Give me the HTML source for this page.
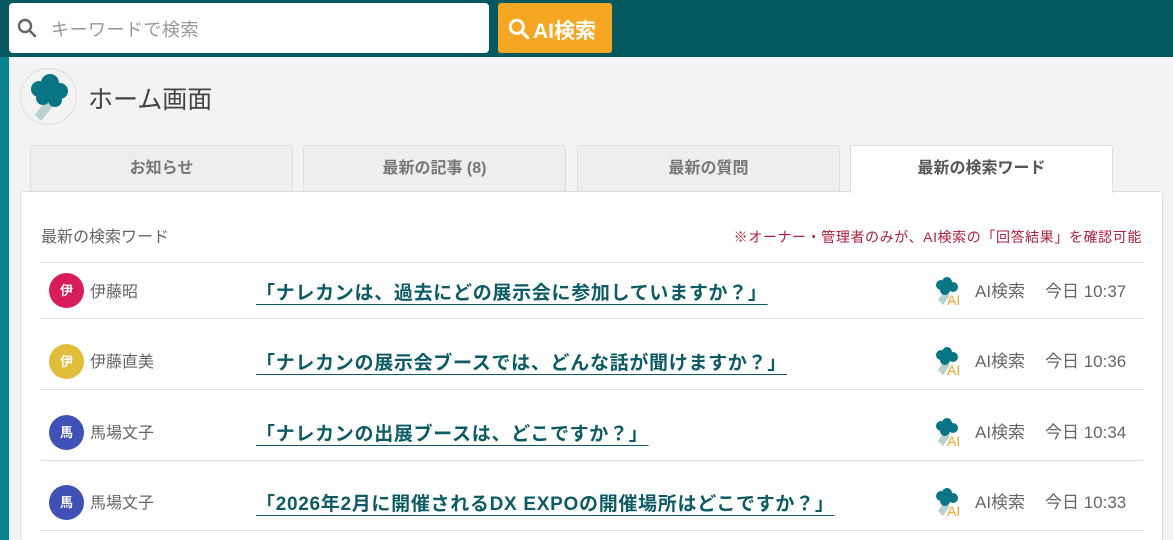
<!DOCTYPE html>
<html><head><meta charset="utf-8"><style>
*{margin:0;padding:0;box-sizing:border-box}
html,body{width:1173px;height:540px;overflow:hidden}
body{background:#f3f3f3;font-family:"Liberation Sans","Noto Sans CJK JP",sans-serif;position:relative}
.top{position:absolute;left:0;top:0;width:1173px;height:57px;background:#055860}
.strip{position:absolute;left:0;top:57px;width:9px;height:483px;background:#0a8390}
.search{position:absolute;left:9px;top:3px;width:480px;height:50px;background:#fff;border-radius:4px}
.search span{position:absolute;left:42px;top:13px;font-size:18px;color:#999;letter-spacing:.5px}
.aibtn{position:absolute;left:498px;top:3px;width:114px;height:50px;background:#f5a623;border-radius:3px;color:#fff;font-size:21px;font-weight:bold}
.aibtn span{position:absolute;left:35px;top:12px}
.logo{position:absolute;left:20px;top:68px;width:57px;height:57px;border-radius:50%;border:1px solid #ddd;background:#f3f3f3}
.title{position:absolute;left:88px;top:80px;font-size:25px;color:#444}
.tab{position:absolute;top:145px;height:47px;width:263px;background:#eee;border:1px solid #ddd;border-bottom:none;border-radius:3px 3px 0 0;text-align:center;line-height:46px;font-size:16px;color:#777;font-weight:bold}
.tab.act{background:#fff;color:#555;z-index:2;height:48px}
.panel{position:absolute;left:20px;top:191px;width:1143px;height:349px;background:#fff;border:1px solid #ddd;border-bottom:none;border-radius:3px 3px 0 0}
.h{position:absolute;left:41px;top:223px;font-size:16px;color:#666}
.note{position:absolute;right:31px;top:227px;font-size:14px;letter-spacing:.6px;color:#b0203d}
.sep{position:absolute;left:41px;width:1102px;height:1px;background:#ddd}
.av{position:absolute;left:49px;width:35px;height:35px;border-radius:50%;color:#fff;font-size:13px;text-align:center;line-height:35px;font-weight:bold}
.nm{position:absolute;left:90px;font-size:16px;color:#666}
.q{position:absolute;left:256px;font-size:19px;letter-spacing:.7px;color:#0d5b66;font-weight:bold;text-decoration:underline;text-underline-offset:5px}
.ai{position:absolute;left:935px;width:28px;height:30px}
.ail{position:absolute;left:975px;font-size:17px;color:#666}
.tm{position:absolute;left:1045px;font-size:17px;color:#666}
</style></head><body>
<div class="top"></div><div class="strip"></div>
<div class="search"><svg style="position:absolute;left:8px;top:15px" width="20" height="20" viewBox="0 0 20 20"><circle cx="8" cy="8" r="6" fill="none" stroke="#666" stroke-width="2.4"/><path d="M12.5 12.5L18 18" stroke="#666" stroke-width="2.6" stroke-linecap="round"/></svg><span>キーワードで検索</span></div>
<div class="aibtn"><svg style="position:absolute;left:10px;top:15px" width="22" height="22" viewBox="0 0 20 20"><circle cx="8" cy="8" r="6" fill="none" stroke="#fff" stroke-width="2.6"/><path d="M12.5 12.5L18 18" stroke="#fff" stroke-width="2.8" stroke-linecap="round"/></svg><span>AI検索</span></div>
<div class="logo"><svg width="57" height="57" viewBox="0 0 57 57"><path d="M14 46L24 32L32 37L20 52Z" fill="#b8d0d0"/><circle cx="18" cy="20" r="8" fill="#0a7585"/><circle cx="29" cy="14" r="9" fill="#0a7585"/><circle cx="39" cy="22" r="8" fill="#0a7585"/><circle cx="34" cy="31" r="7" fill="#0a7585"/><circle cx="22" cy="29" r="7" fill="#0a7585"/><circle cx="28" cy="23" r="7" fill="#0a7585"/></svg></div>
<div class="title">ホーム画面</div>
<div class="tab" style="left:30px">お知らせ</div>
<div class="tab" style="left:303px">最新の記事 (8)</div>
<div class="tab" style="left:577px">最新の質問</div>
<div class="tab act" style="left:850px">最新の検索ワード</div>
<div class="panel"></div>
<div class="h">最新の検索ワード</div>
<div class="note">※オーナー・管理者のみが、AI検索の「回答結果」を確認可能</div>
<div class="sep" style="top:262px"></div><div class="sep" style="top:318px"></div><div class="sep" style="top:389px"></div><div class="sep" style="top:460px"></div><div class="sep" style="top:530px"></div>

<div class="av" style="top:273px;background:#d81b5a">伊</div><div class="nm" style="top:278px">伊藤昭</div>
<div class="q" style="top:278px">「ナレカンは、過去にどの展示会に参加していますか？」</div>
<div class="av" style="top:344px;background:#e2bd3c">伊</div><div class="nm" style="top:348px">伊藤直美</div>
<div class="q" style="top:348px">「ナレカンの展示会ブースでは、どんな話が聞けますか？」</div>
<div class="av" style="top:415px;background:#3f51b5">馬</div><div class="nm" style="top:419px">馬場文子</div>
<div class="q" style="top:419px">「ナレカンの出展ブースは、どこですか？」</div>
<div class="av" style="top:485px;background:#3f51b5">馬</div><div class="nm" style="top:489px">馬場文子</div>
<div class="q" style="top:489px">「2026年2月に開催されるDX EXPOの開催場所はどこですか？」</div>

<svg class="ai" style="top:276px" viewBox="0 0 28 30"><path d="M3 24L9 15L15 19L8 29Z" fill="#b8d0d0"/><circle cx="6" cy="9" r="5" fill="#0a7585"/><circle cx="12" cy="6" r="5" fill="#0a7585"/><circle cx="18" cy="11" r="5" fill="#0a7585"/><circle cx="10" cy="14" r="5" fill="#0a7585"/><text x="12" y="29" font-size="14" fill="#f5a623" font-family="Liberation Sans">AI</text></svg>
<svg class="ai" style="top:346px" viewBox="0 0 28 30"><path d="M3 24L9 15L15 19L8 29Z" fill="#b8d0d0"/><circle cx="6" cy="9" r="5" fill="#0a7585"/><circle cx="12" cy="6" r="5" fill="#0a7585"/><circle cx="18" cy="11" r="5" fill="#0a7585"/><circle cx="10" cy="14" r="5" fill="#0a7585"/><text x="12" y="29" font-size="14" fill="#f5a623" font-family="Liberation Sans">AI</text></svg>
<svg class="ai" style="top:417px" viewBox="0 0 28 30"><path d="M3 24L9 15L15 19L8 29Z" fill="#b8d0d0"/><circle cx="6" cy="9" r="5" fill="#0a7585"/><circle cx="12" cy="6" r="5" fill="#0a7585"/><circle cx="18" cy="11" r="5" fill="#0a7585"/><circle cx="10" cy="14" r="5" fill="#0a7585"/><text x="12" y="29" font-size="14" fill="#f5a623" font-family="Liberation Sans">AI</text></svg>
<svg class="ai" style="top:487px" viewBox="0 0 28 30"><path d="M3 24L9 15L15 19L8 29Z" fill="#b8d0d0"/><circle cx="6" cy="9" r="5" fill="#0a7585"/><circle cx="12" cy="6" r="5" fill="#0a7585"/><circle cx="18" cy="11" r="5" fill="#0a7585"/><circle cx="10" cy="14" r="5" fill="#0a7585"/><text x="12" y="29" font-size="14" fill="#f5a623" font-family="Liberation Sans">AI</text></svg>

<div class="ail" style="top:277px">AI検索</div><div class="tm" style="top:277px">今日 10:37</div>
<div class="ail" style="top:347px">AI検索</div><div class="tm" style="top:347px">今日 10:36</div>
<div class="ail" style="top:418px">AI検索</div><div class="tm" style="top:418px">今日 10:34</div>
<div class="ail" style="top:488px">AI検索</div><div class="tm" style="top:488px">今日 10:33</div>
</body></html>
